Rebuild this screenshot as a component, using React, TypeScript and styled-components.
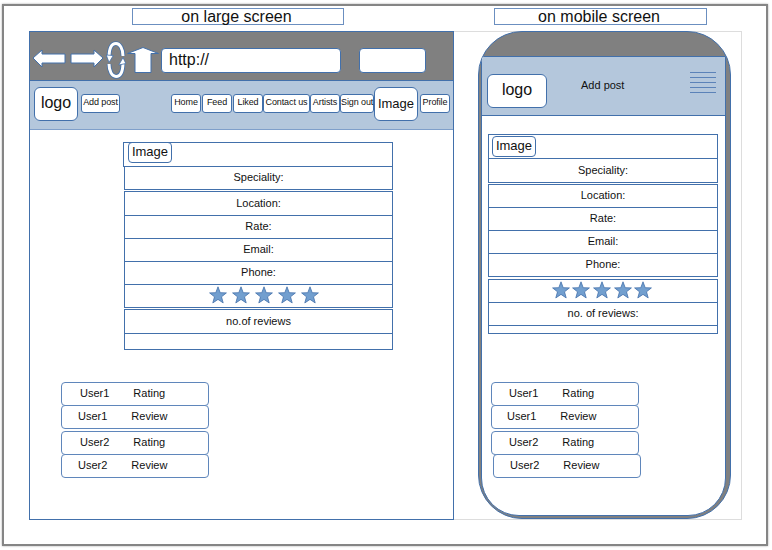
import styled, { createGlobalStyle } from "styled-components";

const BLUE = "#4270ab";

const GlobalStyle = createGlobalStyle`
  * {
    box-sizing: border-box;
  }
  body {
    margin: 0;
    background: #ffffff;
    color: #111111;
    font-family: "Liberation Sans", Arial, sans-serif;
  }
`;

const Page = styled.div`
  width: 772px;
  height: 550px;
  padding: 4px 0 0 2px;
`;
const Frame = styled.div`
  width: 766px;
  height: 542px;
  padding: 2px 0 0 25px;
  border: 2px solid #858585;
  box-shadow: 0 0 2px #a8a8a8;
`;
const Titles = styled.div`
  display: flex;
  height: 17px;
  margin-bottom: 6px;
`;
const Title = styled.div<{ $ml: number; $w: number }>`
  width: ${(props) => props.$w}px;
  margin-left: ${(props) => props.$ml}px;
  padding-right: 3px;
  border: 1px solid #6b8fc0;
  font-size: 16px;
  line-height: 15px;
  text-align: center;
`;
const Screens = styled.div`
  display: flex;
  height: 489px;
`;
const Desktop = styled.div`
  width: 425px;
  border: 1px solid ${BLUE};
`;
const Toolbar = styled.div`
  display: flex;
  align-items: center;
  height: 49px;
  padding-top: 8px;
  background: #808080;
  border-bottom: 1px solid ${BLUE};
`;
const ToolIcon = styled.svg<{ $ml: number; $mb?: number }>`
  flex: none;
  margin-left: ${(props) => props.$ml}px;
  margin-bottom: ${(props) => props.$mb ?? 0}px;
`;
const Field = styled.div<{ $ml: number; $w: number }>`
  width: ${(props) => props.$w}px;
  height: 25px;
  margin-left: ${(props) => props.$ml}px;
  padding-left: 7px;
  background: #ffffff;
  border: 1px solid ${BLUE};
  border-radius: 4px;
  font-size: 16px;
  line-height: 21px;
`;
const Nav = styled.nav`
  display: flex;
  align-items: center;
  height: 49px;
  padding: 0 3px 3px 4px;
  background: #b4c7dc;
  border-bottom: 1px solid #7f9fca;
`;
const NavLinks = styled.div`
  display: flex;
  align-items: center;
  margin-left: auto;
`;
const Logo = styled.div<{ $w: number; $mt?: number }>`
  flex: none;
  width: ${(props) => props.$w}px;
  height: 34px;
  margin-top: ${(props) => props.$mt ?? 0}px;
  background: #ffffff;
  border: 1px solid ${BLUE};
  border-radius: 6px;
  font-size: 16px;
  line-height: 30px;
  text-align: center;
`;
const NavButton = styled.div<{ $w: number; $ml?: number }>`
  flex: none;
  width: ${(props) => props.$w}px;
  height: 19px;
  margin-left: ${(props) => props.$ml ?? 0}px;
  background: #ffffff;
  border: 1px solid ${BLUE};
  border-radius: 3px;
  font-size: 9px;
  letter-spacing: -0.1px;
  line-height: 15px;
  text-align: center;
  white-space: nowrap;
`;
const NavImage = styled.div`
  flex: none;
  width: 44px;
  height: 34px;
  background: #ffffff;
  border: 1px solid ${BLUE};
  border-radius: 6px;
  font-size: 13px;
  line-height: 31px;
  text-align: center;
`;
const Card = styled.div<{ $ml: number; $mt: number; $w: number }>`
  width: ${(props) => props.$w}px;
  margin: ${(props) => props.$mt}px 0 0 ${(props) => props.$ml}px;
`;
const Row = styled.div<{ $h: number; $top?: boolean; $gap?: number }>`
  display: flex;
  align-items: center;
  justify-content: center;
  height: ${(props) => props.$h}px;
  margin-top: ${(props) => props.$gap ?? 0}px;
  padding-bottom: 2px;
  border: 1px solid ${BLUE};
  border-top: ${(props) => (props.$top ? `1px solid ${BLUE}` : "none")};
  font-size: 11px;
`;
const ImageRow = styled.div<{ $bleed: number; $pad: number }>`
  display: flex;
  align-items: flex-start;
  height: 25px;
  margin-left: -${(props) => props.$bleed}px;
  padding-left: ${(props) => props.$pad}px;
  border: 1px solid ${BLUE};
`;
const ImageButton = styled.div<{ $mt: number }>`
  width: 44px;
  height: 21px;
  margin-top: ${(props) => props.$mt}px;
  border: 1px solid ${BLUE};
  border-radius: 4px;
  font-size: 13px;
  line-height: 18px;
  text-align: center;
`;
const Stars = styled.div<{ $gap: number; $shift: number }>`
  display: flex;
  gap: ${(props) => props.$gap}px;
  margin-left: ${(props) => props.$shift}px;
`;
const Reviews = styled.div<{ $ml: number; $mt: number }>`
  width: 150px;
  margin: ${(props) => props.$mt}px 0 0 ${(props) => props.$ml}px;
`;
const ReviewRow = styled.div<{ $pad: number; $split?: boolean; $first?: boolean; $shift?: number }>`
  display: flex;
  gap: 24px;
  align-items: center;
  width: 148px;
  height: 24px;
  margin-top: ${(props) => (props.$first ? 0 : props.$split ? 2 : -1)}px;
  margin-left: ${(props) => props.$shift ?? 0}px;
  padding: 0 0 2px ${(props) => props.$pad}px;
  background: #ffffff;
  border: 1px solid #5f86bb;
  border-radius: 4px;
  font-size: 11px;
`;
const MobilePanel = styled.div`
  width: 288px;
  padding-left: 24px;
  border: 1px solid #dddddd;
  border-left: none;
`;
const Phone = styled.div`
  display: flex;
  flex-direction: column;
  width: 253px;
  height: 488px;
  margin-top: -1px;
  padding: 24px 4px 2px 2px;
  overflow: hidden;
  background: #808080;
  border: 1px solid ${BLUE};
  border-radius: 44px;
`;
const PhoneScreen = styled.div`
  flex: 1;
  background: #ffffff;
  border: 1px solid ${BLUE};
  border-radius: 0 0 38px 38px;
`;
const PhoneHeader = styled.div`
  display: flex;
  align-items: flex-start;
  height: 59px;
  padding-left: 5px;
  background: #b4c7dc;
  border-bottom: 1px solid ${BLUE};
`;
const AddPost = styled.div`
  margin: 22px 0 0 34px;
  font-size: 11px;
`;
const Burger = styled.div`
  display: flex;
  flex-direction: column;
  gap: 4px;
  width: 26px;
  margin: 15px 9px 0 auto;
`;
const BurgerLine = styled.span`
  height: 1px;
  background: #5b82b8;
`;

const navItems = [
  { label: "Home", w: 30 },
  { label: "Feed", w: 30, ml: 1 },
  { label: "Liked", w: 30, ml: 1 },
  { label: "Contact us", w: 47 },
  { label: "Artists", w: 30 },
  { label: "Sign out", w: 34 },
];

const details = ["Rate:", "Email:", "Phone:"];

function Star() {
  return (
    <svg width="18" height="18" viewBox="0 0 18 18">
      <path
        d="M9 .8l2.2 5.9 6.2.2-4.9 3.9 1.7 6.1L9 13.4l-5.2 3.5 1.7-6.1L.6 6.9l6.2-.2z"
        fill="#729fcf"
        stroke={BLUE}
        strokeWidth="0.8"
      />
    </svg>
  );
}

function StarRow({ gap, shift }: { gap: number; shift: number }) {
  return (
    <Stars $gap={gap} $shift={shift}>
      <Star />
      <Star />
      <Star />
      <Star />
      <Star />
    </Stars>
  );
}

function ReviewList({
  ml,
  mt,
  pad,
  lastPad,
  lastShift,
}: {
  ml: number;
  mt: number;
  pad: number;
  lastPad: number;
  lastShift?: number;
}) {
  return (
    <Reviews $ml={ml} $mt={mt}>
      <ReviewRow $pad={pad} $first>
        <span>User1</span>
        <span>Rating</span>
      </ReviewRow>
      <ReviewRow $pad={pad - 2}>
        <span>User1</span>
        <span>Review</span>
      </ReviewRow>
      <ReviewRow $pad={pad} $split>
        <span>User2</span>
        <span>Rating</span>
      </ReviewRow>
      <ReviewRow $pad={lastPad} $shift={lastShift}>
        <span>User2</span>
        <span>Review</span>
      </ReviewRow>
    </Reviews>
  );
}

function Tools() {
  return (
    <>
      <ToolIcon $ml={2} $mb={4} width="34" height="18" viewBox="0 0 34 18">
        <path d="M1 9l9-8v4h23v9H10v4z" fill="#fff" stroke={BLUE} />
      </ToolIcon>
      <ToolIcon $ml={4} $mb={4} width="34" height="18" viewBox="0 0 34 18">
        <path d="M33 9l-9-8v4H1v9h23v4z" fill="#fff" stroke={BLUE} />
      </ToolIcon>
      <ToolIcon $ml={2} width="20" height="38" viewBox="0 0 20 38">
        <g fill="none" stroke={BLUE} strokeWidth="4.6">
          <path d="M3 17C3 7 6 2.500 10 2.500s7 5.500 7 12.500" />
          <path d="M17 21c0 10-3 14.500-7 14.500s-7-5.500-7-12.500" />
        </g>
        <g fill="none" stroke="#fff" strokeWidth="3">
          <path d="M3 17C3 7 6 2.500 10 2.500s7 5.500 7 12.500" />
          <path d="M17 21c0 10-3 14.500-7 14.500s-7-5.500-7-12.500" />
        </g>
        <g fill="#fff" stroke={BLUE} strokeWidth="0.8">
          <path d="M.3 14l7 .5L3 21.500z" />
          <path d="M12.800 24l7-1.500L17 16.500z" />
        </g>
      </ToolIcon>
      <ToolIcon $ml={1} width="32" height="26" viewBox="0 0 32 26">
        <path d="M16 .5L31.500 6.500H24V25.500H8V6.500H.5z" fill="#fff" stroke={BLUE} />
      </ToolIcon>
    </>
  );
}

function App() {
  return (
    <Page>
      <GlobalStyle />
      <Frame>
        <Titles>
          <Title $ml={103} $w={212}>on large screen</Title>
          <Title $ml={150} $w={213}>on mobile screen</Title>
        </Titles>
        <Screens>
          <Desktop>
            <Toolbar>
              <Tools />
              <Field $ml={2} $w={180}>http://</Field>
              <Field $ml={18} $w={67} />
            </Toolbar>
            <Nav>
              <Logo $w={44}>logo</Logo>
              <NavButton $w={39} $ml={3}>Add post</NavButton>
              <NavLinks>
                {navItems.map((item) => (
                  <NavButton key={item.label} $w={item.w} $ml={item.ml}>
                    {item.label}
                  </NavButton>
                ))}
                <NavImage>Image</NavImage>
                <NavButton $w={30} $ml={2}>Profile</NavButton>
              </NavLinks>
            </Nav>
            <Card $ml={94} $mt={12} $w={269}>
              <ImageRow $bleed={1} $pad={4}>
                <ImageButton $mt={-1}>Image</ImageButton>
              </ImageRow>
              <Row $h={23}>Speciality:</Row>
              <Row $h={25} $top $gap={1}>Location:</Row>
              {details.map((label) => (
                <Row key={label} $h={23}>{label}</Row>
              ))}
              <Row $h={23}><StarRow gap={5} shift={10} /></Row>
              <Row $h={25} $top $gap={1}>no.of reviews</Row>
              <Row $h={16} />
            </Card>
            <ReviewList ml={31} mt={32} pad={18} lastPad={16} />
          </Desktop>
          <MobilePanel>
            <Phone>
              <PhoneScreen>
                <PhoneHeader>
                  <Logo $w={60} $mt={17}>logo</Logo>
                  <AddPost>Add post</AddPost>
                  <Burger>
                    <BurgerLine />
                    <BurgerLine />
                    <BurgerLine />
                    <BurgerLine />
                    <BurgerLine />
                  </Burger>
                </PhoneHeader>
                <Card $ml={6} $mt={18} $w={230}>
                  <ImageRow $bleed={0} $pad={3}>
                    <ImageButton $mt={1}>Image</ImageButton>
                  </ImageRow>
                  <Row $h={24}>Speciality:</Row>
                  <Row $h={24} $top $gap={1}>Location:</Row>
                  {details.map((label) => (
                    <Row key={label} $h={23}>{label}</Row>
                  ))}
                  <Row $h={24} $top $gap={2}><StarRow gap={2.6} shift={-2} /></Row>
                  <Row $h={23}>no. of reviews:</Row>
                  <Row $h={8} />
                </Card>
                <ReviewList ml={9} mt={48} pad={17} lastPad={16} lastShift={2} />
              </PhoneScreen>
            </Phone>
          </MobilePanel>
        </Screens>
      </Frame>
    </Page>
  );
}

export default App;
